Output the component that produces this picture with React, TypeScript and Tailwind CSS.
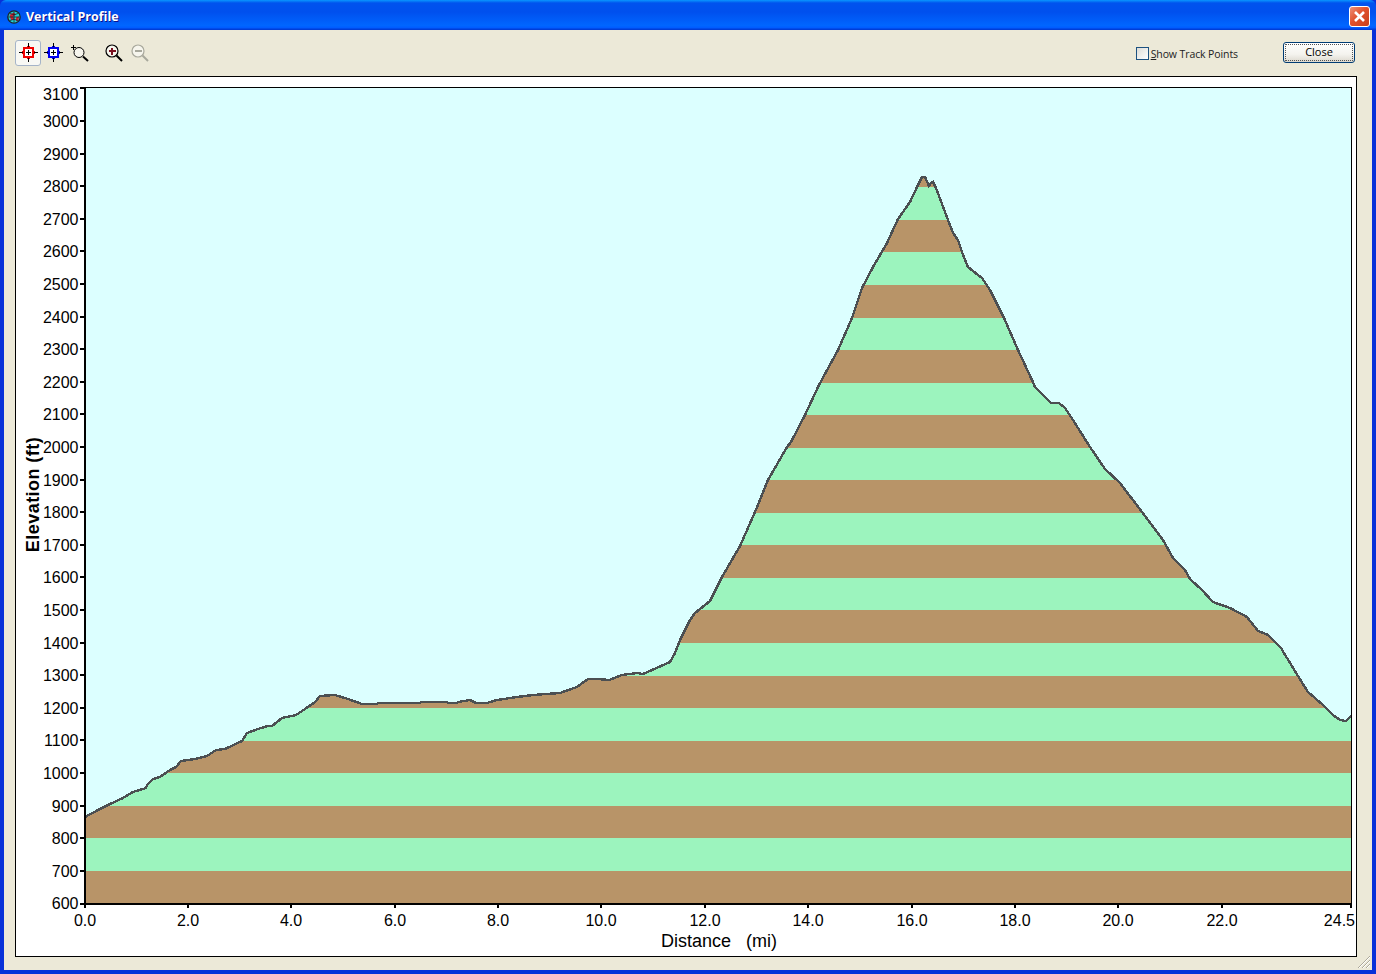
const profile: [number, number][] = [
  [85, 817], [98, 810], [110, 804], [123, 798], [133, 792], [146, 788], [147, 785], [153, 779], [160, 777], [170, 770],
  [176, 767], [181, 761], [195, 759], [207, 756], [216, 750], [225, 749], [242, 741], [247, 733], [258, 729], [268, 726],
  [272, 726], [282, 718], [296, 715], [305, 709], [315, 702], [320, 696], [335, 695], [348, 699], [362, 704], [377, 704],
  [378, 703], [420, 703], [421, 702], [447, 702], [448, 703], [457, 703], [458, 702], [470, 700], [476, 703], [487, 703],
  [497, 700], [517, 697], [533, 695], [560, 693], [577, 687], [588, 679], [597, 679], [609, 680], [622, 675], [637, 673],
  [643, 674], [670, 662], [675, 653], [680, 640], [690, 620], [695, 613], [710, 601], [722, 577], [740, 546], [755, 512],
  [768, 480], [787, 447], [791, 442], [805, 415], [819, 385], [838, 350], [852, 318], [862, 288], [873, 267], [887, 243],
  [898, 219], [910, 202], [918, 185], [922, 177], [925, 177], [929, 186], [931, 183], [933, 182], [936, 188], [948, 220],
  [953, 233], [958, 240], [962, 252], [968, 267], [978, 275], [982, 278], [990, 290], [1004, 318], [1018, 350], [1032, 380],
  [1035, 387], [1051, 403], [1059, 403], [1065, 408], [1073, 420], [1090, 447], [1105, 469], [1120, 483], [1142, 512],
  [1163, 540], [1173, 558], [1185, 570], [1190, 579], [1202, 590], [1213, 602], [1230, 608], [1247, 617], [1258, 631],
  [1268, 635], [1281, 648], [1287, 658], [1298, 676], [1308, 692], [1323, 705], [1333, 715], [1340, 720], [1346, 721], [1351, 716],
];

const pointList = profile.map(([x, y]) => `${x},${y}`).join(" ");
const areaPoints = `85,903 ${pointList} 1351,903`;

const bandEdges = [903, 871, 838, 806, 773, 741, 708, 676, 643, 610, 578, 545, 513, 480, 448, 415, 383, 350, 318, 285, 252, 220, 187, 155];

const yLabels: [string, number][] = [
  ["3100", 88], ["3000", 121], ["2900", 154], ["2800", 186], ["2700", 219], ["2600", 251], ["2500", 284], ["2400", 317],
  ["2300", 349], ["2200", 382], ["2100", 414], ["2000", 447], ["1900", 480], ["1800", 512], ["1700", 545], ["1600", 577],
  ["1500", 610], ["1400", 643], ["1300", 675], ["1200", 708], ["1100", 740], ["1000", 773], ["900", 806], ["800", 838],
  ["700", 871], ["600", 904],
];

const xLabels: [string, number][] = [
  ["0.0", 85], ["2.0", 188], ["4.0", 291], ["6.0", 395], ["8.0", 498], ["10.0", 601], ["12.0", 705], ["14.0", 808],
  ["16.0", 912], ["18.0", 1015], ["20.0", 1118], ["22.0", 1222], ["24.5", 1351],
];

function ProfileChart() {
  return (
    <svg width="1340" height="879" viewBox="16 77 1340 879" className="block font-['Liberation_Sans',sans-serif]">
      <defs>
        <clipPath id="terrain">
          <polygon points={areaPoints} />
        </clipPath>
      </defs>
      <rect x="85" y="88" width="1266" height="815" fill="#dcffff" />
      <g clipPath="url(#terrain)" shapeRendering="crispEdges">
        {bandEdges.slice(0, -1).map((bottom, i) => (
          <rect key={bottom} x="85" y={bandEdges[i + 1]} width="1266" height={bottom - bandEdges[i + 1]} fill={i % 2 === 0 ? "#b89468" : "#9cf4be"} />
        ))}
      </g>
      <polyline points={pointList} fill="none" stroke="#4b4f52" strokeWidth="2.4" shapeRendering="crispEdges" />
      <g shapeRendering="crispEdges" fill="#000">
        <rect x="85" y="87" width="1267" height="1" />
        <rect x="1351" y="87" width="1" height="820" />
        <rect x="84" y="87" width="2" height="818" />
        <rect x="84" y="903" width="1268" height="2" />
        {yLabels.map(([label, y]) => (
          <rect key={label} x="80" y={y - 1} width="4" height="2" />
        ))}
        {xLabels.map(([label, x]) => (
          <rect key={label} x={x - 1} y="905" width="2" height="3" />
        ))}
      </g>
      <g fontSize="16" fill="#000">
        {yLabels.map(([label, y]) => (
          <text key={label} x="78.5" y={(label === "3100" ? 94 : label === "600" ? 903 : y) + 6} textAnchor="end">
            {label}
          </text>
        ))}
        {xLabels.map(([label, x]) => (
          <text key={label} x={label === "24.5" ? 1355 : x} y="926" textAnchor={label === "24.5" ? "end" : "middle"}>
            {label}
          </text>
        ))}
        <text x="661" y="947" fontSize="18" xmlSpace="preserve">Distance   (mi)</text>
        <text x="39" y="494.5" textAnchor="middle" fontSize="18" letterSpacing="0.45" fontWeight="700" transform="rotate(-90 39 494.5)">
          Elevation (ft)
        </text>
      </g>
    </svg>
  );
}

function CrossIcon({ color }: { color: string }) {
  return (
    <svg width="20" height="20" viewBox="0 0 20 20" shapeRendering="crispEdges">
      <rect x="6" y="5" width="9" height="9" fill="#fff" stroke={color} strokeWidth="2" />
      <rect x="9" y="3" width="3" height="1" fill={color} />
      <rect x="9" y="15" width="3" height="1" fill={color} />
      <rect x="4" y="8" width="1" height="3" fill={color} />
      <rect x="16" y="8" width="1" height="3" fill={color} />
      <path d="M10.5 0V4M10.5 15V19M1 9.5H5M16 9.5H20M8 9.5H13M10.5 7V12" stroke="#000" strokeWidth="1" fill="none" />
    </svg>
  );
}

function LensIcon({ tone, mark }: { tone: string; mark: "plus" | "minus" | "free" }) {
  return (
    <svg width="20" height="20" viewBox="0 0 20 20">
      {mark === "free" ? (
        <>
          <circle cx="9" cy="9.5" r="5" fill="#fff" fillOpacity="0.55" stroke={tone} strokeWidth="1" />
          <path d="M1 4.5H6M3.5 2V7" stroke={tone} strokeWidth="1" shapeRendering="crispEdges" />
          <path d="M13 13.5L18 18" stroke={tone} strokeWidth="2" />
        </>
      ) : (
        <>
          <circle cx="8" cy="8" r="6" fill="#fff" fillOpacity="0.55" stroke={tone} strokeWidth="1.2" />
          <path d="M12.5 12.5L18 18" stroke={tone} strokeWidth="2" />
          {mark === "plus" ? (
            <path d="M4.5 8H11.5M8 4.5V11.5" stroke="#7a1020" strokeWidth="2.4" shapeRendering="crispEdges" />
          ) : (
            <path d="M4.5 8H11.5" stroke={tone} strokeWidth="2" shapeRendering="crispEdges" />
          )}
        </>
      )}
    </svg>
  );
}

function GlobeIcon() {
  return (
    <svg width="14" height="14" viewBox="0 0 14 14" className="shrink-0">
      <circle cx="7" cy="7" r="6.2" fill="#22d4d4" stroke="#1a2028" strokeWidth="1.3" />
      <path d="M2.5 5L6.5 2.5L9 4.5L6 6.5L7.5 9.5L4 10Z" fill="#d02430" />
      <path d="M9 7.5L12 6.5L11.5 10L9 11.5Z" fill="#d02430" />
      <path d="M1.5 7H12.5M7 1.5V12.5M3 3.5Q7 6 11 3.5M3 10.5Q7 8 11 10.5" fill="none" stroke="#1a2028" strokeWidth="0.8" />
    </svg>
  );
}

export default function App() {
  return (
    <div className="relative flex h-[974px] w-[1376px] flex-col overflow-hidden bg-[#0831d9]">
      <div className="flex h-[30px] shrink-0 items-center rounded-t-[6px] bg-[linear-gradient(180deg,#0997ff_0%,#0053ee_10%,#0050ee_40%,#0066ff_85%,#005bff_93%,#003dd7_97%,#003dd7_100%)] pl-[7px] pr-[6px] pt-[3px]">
        <GlobeIcon />
        <span className="ml-[5px] mt-[2px] font-['Open_Sans',sans-serif] text-[12.5px] font-bold text-white [text-shadow:1px_1px_0_#0f1089]">
          Vertical Profile
        </span>
        <button className="ml-auto flex h-[21px] w-[21px] items-center justify-center rounded-[3px] border border-white bg-[linear-gradient(135deg,#ee9078_0%,#e0512c_45%,#c8401a_100%)]">
          <svg width="13" height="13" viewBox="0 0 13 13">
            <path d="M2 2L11 11M11 2L2 11" stroke="#fff" strokeWidth="2.6" />
          </svg>
        </button>
      </div>

      <div className="mx-[4px] mb-[4px] flex min-h-0 flex-1 flex-col bg-[#ece9d8]">
        <div className="flex h-[46px] shrink-0 items-center pl-[11px] pr-[15px]">
          <div className="flex h-[26px] w-[26px] items-center justify-center rounded-[3px] border border-[#a5b4c8] bg-[#f8f8f4]">
            <CrossIcon color="#f00000" />
          </div>
          <div className="ml-[2px] flex h-[26px] w-[20px] items-center justify-center">
            <CrossIcon color="#0000f0" />
          </div>
          <div className="ml-[7px] flex h-[26px] w-[20px] items-center justify-center">
            <LensIcon tone="#000" mark="free" />
          </div>
          <div className="ml-[14px] flex h-[26px] w-[20px] items-center justify-center">
            <LensIcon tone="#000" mark="plus" />
          </div>
          <div className="ml-[6px] flex h-[26px] w-[20px] items-center justify-center">
            <LensIcon tone="#a8a89c" mark="minus" />
          </div>

          <label className="ml-auto flex items-center font-['Open_Sans',sans-serif] text-[10.5px] text-[#222]">
            <span className="block h-[13px] w-[13px] border border-[#1c5180] bg-[linear-gradient(135deg,#dcdcd7_0%,#ffffff_100%)]" />
            <span className="ml-[2px] mt-[4px] tracking-[-0.1px]">
              <u>S</u>how Track Points
            </span>
          </label>
          <button className="mb-[2px] ml-[45px] mr-[2px] h-[21px] w-[72px] rounded-[3px] border border-[#003c74] bg-[linear-gradient(180deg,#ffffff_0%,#f4f3ee_60%,#dcd8ce_100%)] font-['Open_Sans',sans-serif] text-[11px] text-black outline-1 -outline-offset-3 outline-dotted outline-[#555]">
            Close
          </button>
        </div>

        <div className="ml-[11px] mr-[15px] h-[881px] shrink-0 border border-black bg-white">
          <ProfileChart />
        </div>
      </div>

      <svg width="14" height="14" viewBox="0 0 14 14" className="absolute bottom-[5px] right-[5px]" strokeWidth="1">
        <path d="M1 13L13 1M5 13L13 5M9 13L13 9" stroke="#aca899" />
        <path d="M2 13L13 2M6 13L13 6M10 13L13 10" stroke="#ffffff" />
      </svg>
    </div>
  );
}
